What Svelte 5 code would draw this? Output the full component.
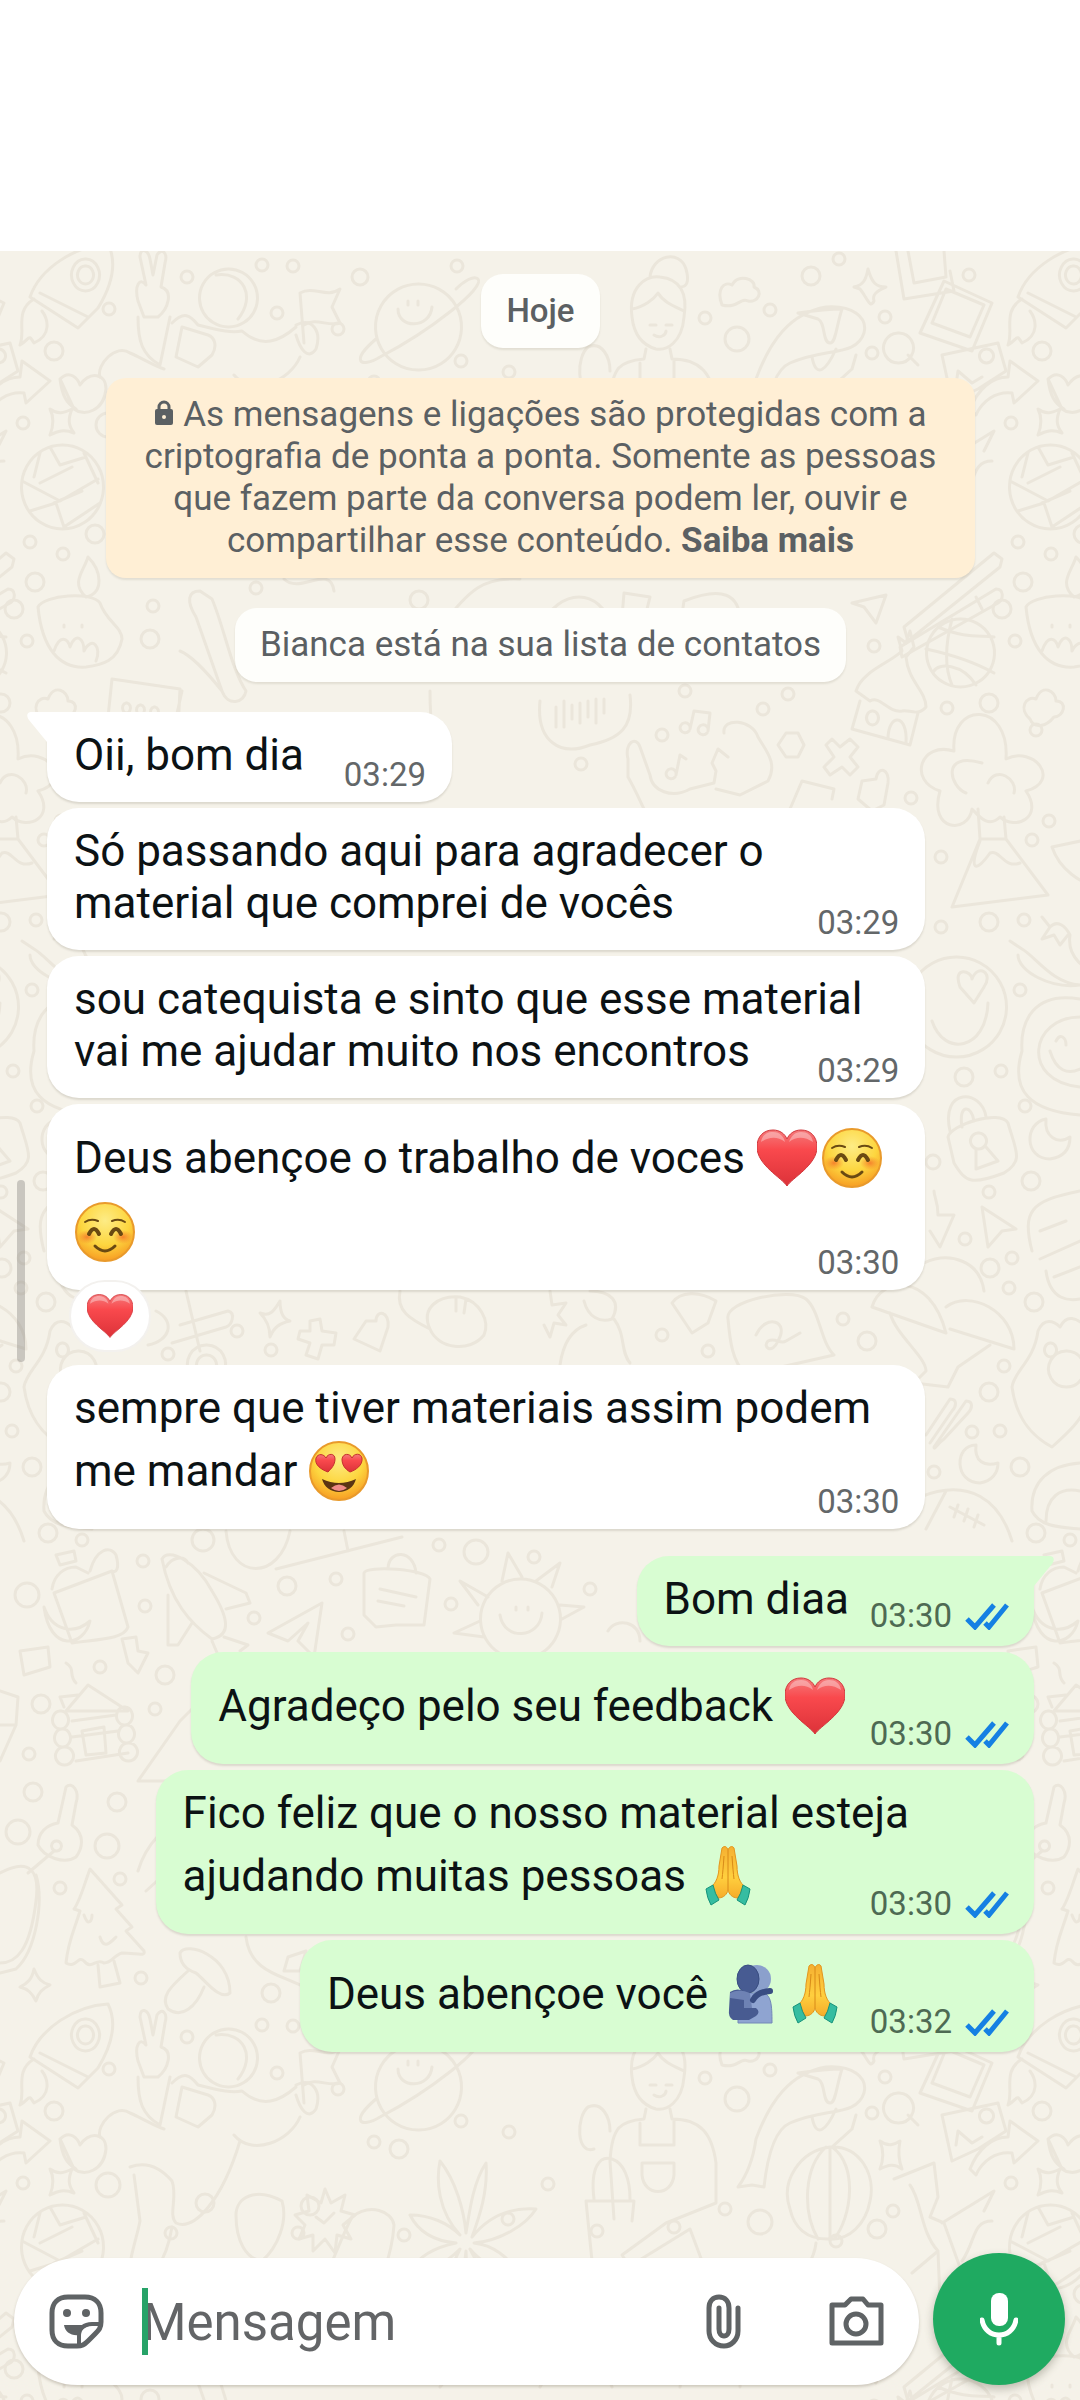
<script lang="ts">
	type Emoji = 'heart' | 'blush' | 'heartEyes' | 'pray' | 'hug';

	interface Message {
		text: string;
		emojis?: Emoji[];
		time: string;
		sent?: boolean;
		tail?: boolean;
		reaction?: Emoji;
	}

	const messages: Message[] = [
		{ text: 'Oii, bom dia', time: '03:29', tail: true },
		{ text: 'Só passando aqui para agradecer o material que comprei de vocês', time: '03:29' },
		{ text: 'sou catequista e sinto que esse material vai me ajudar muito nos encontros', time: '03:29' },
		{ text: 'Deus abençoe o trabalho de voces', emojis: ['heart', 'blush', 'blush'], time: '03:30', reaction: 'heart' },
		{ text: 'sempre que tiver materiais assim podem me mandar', emojis: ['heartEyes'], time: '03:30' },
		{ text: 'Bom diaa', time: '03:30', sent: true, tail: true },
		{ text: 'Agradeço pelo seu feedback', emojis: ['heart'], time: '03:30', sent: true },
		{ text: 'Fico feliz que o nosso material esteja ajudando muitas pessoas', emojis: ['pray'], time: '03:30', sent: true },
		{ text: 'Deus abençoe você', emojis: ['hug', 'pray'], time: '03:32', sent: true }
	];

	const emojiLabels: Record<Emoji, string> = {
		heart: 'coração vermelho',
		blush: 'rosto sorridente',
		heartEyes: 'rosto com olhos de coração',
		pray: 'mãos juntas',
		hug: 'pessoas se abraçando'
	};

	let draft = $state('');

	// wallpaper tile, repeated every TILE_W x TILE_H
	const TILE_W = 988;
	const TILE_H = 1760;
	const tiles = [[-TILE_W, 0], [0, 0], [TILE_W, 0], [-TILE_W, TILE_H], [0, TILE_H], [TILE_W, TILE_H]];

	const dots = [
		[262, 14, 6], [293, 15, 6], [187, 26, 6], [360, 26, 8], [457, 15, 6], [109, 58, 6], [277, 62, 6], [338, 78, 6],
		[54, 100, 9], [461, 110, 6], [509, 121, 6], [811, 25, 9], [839, 8, 6], [969, 24, 6], [705, 67, 6], [770, 59, 6],
		[885, 66, 6], [737, 88, 12], [872, 102, 6], [108, 174, 12], [23, 172, 6], [205, 192, 9],
		[310, 195, 9], [374, 131, 6], [399, 138, 9], [548, 173, 6], [725, 198, 6], [760, 211, 12], [893, 200, 6],
		[171, 222, 6], [298, 222, 6], [404, 224, 6], [508, 208, 6], [597, 220, 6], [674, 216, 6], [836, 230, 6],
		[877, 218, 9], [95, 283, 9], [30, 291, 6], [63, 303, 6], [35, 331, 9],
		[14, 358, 9], [150, 388, 9], [256, 337, 6], [153, 355, 6], [419, 349, 9], [27, 390, 6], [874, 395, 6],
		[989, 452, 9], [947, 457, 6], [685, 440, 6],
		[788, 443, 6], [763, 458, 6], [662, 484, 6], [581, 513, 6], [911, 547, 6], [1036, 479, 6],
		[1049, 570, 6], [1032, 589, 6], [941, 606, 6], [941, 676, 6], [989, 671, 9], [1024, 669, 6],
		[1020, 739, 6], [964, 826, 9], [1001, 820, 6], [1025, 855, 6], [933, 911, 7], [1031, 930, 9], [989, 941, 6],
		[965, 988, 6], [1012, 1007, 6], [990, 1017, 9], [1009, 1037, 6], [1034, 1051, 9], [843, 1068, 6],
		[867, 1090, 9], [1004, 1115, 6], [989, 1141, 9], [972, 1181, 6], [1000, 1180, 6], [1020, 1216, 9],
		[934, 1221, 6], [1036, 1282, 9], [237, 1080, 6], [271, 1099, 6], [168, 1103, 6], [662, 1084, 6],
		[708, 1100, 6], [82, 1289, 6], [203, 1289, 11], [27, 1344, 12], [143, 1310, 6],
		[145, 1355, 6], [287, 1335, 9], [336, 1328, 6], [254, 1367, 6], [451, 1353, 6], [348, 1383, 6],
		[476, 1301, 12], [534, 1306, 6], [590, 1338, 6], [439, 1294, 6], [100, 1416, 6], [165, 1424, 9],
		[41, 1453, 9], [155, 1458, 6], [29, 1503, 6], [33, 1541, 9], [117, 1551, 9], [18, 1581, 12],
		[107, 1595, 12], [60, 1637, 6], [120, 1628, 6], [141, 1727, 6], [271, 1742, 9]
	];

	const doodles = [
		// rocket with flame
		'M30 46 C40 17 75-5 108-7 C117 11 112 34 98 57 L78 77 Z M34 48 C14 60 26 80 20 94 C30 88 28 82 34 92 C52 84 48 68 42 60 M40 42 L88 66',
		'M85 8 a14 16 0 1 0 1 0 M85 15 a8 9 0 1 0 1 0',
		// peace sign and astronaut
		'M138 50 C134 34 140 26 146 34 L140 6 C140-4 148-2 150 8 L153 24 L157 4 C162-4 168 2 165 12 L161 36 C174 40 168 58 158 66 L144 66 Z M138 66 C138 90 142 104 160 114 L170 66',
		'M228 18 a29 29 0 1 0 1 0 M216 24 C244 20 256 46 238 68 M172 72 C184 60 190 64 198 74 C222 80 232 82 242 80 C262 98 280 90 296 76 M100 126 C96 114 116 92 130 102 C140 106 152 114 164 118 M296 74 C312 66 322 80 316 98 C308 110 300 98 296 84 M300 106 C290 130 252 146 234 124 M182 76 L208 84 C214 86 218 94 212 104 L198 116 L176 106 Z',
		'M60 128 C70 118 78 128 80 134 C90 120 106 122 106 138 C104 160 84 166 74 158 Z M60 128 C62 144 66 152 76 158 M130 156 C146 150 160 156 172 170 C178 186 168 204 176 212 C194 220 222 190 240 130 M134 164 L140 210 C134 240 124 256 136 268 C150 272 166 252 172 216',
		// flag
		'M300 42 L304 92 M300 42 C314 34 326 48 340 38 L332 56 L340 72 C328 76 316 66 304 74',
		// planet
		'M418 33 a43 43 0 1 0 1 0 M398 58 C398 78 430 78 432 56 M408 50 v4 M418 50 v4 M376 88 C350 110 360 118 380 106 C430 80 486 36 478 28 C474 24 464 30 456 38',
		// gardener
		'M632 66 C628 36 646 24 660 26 C680 28 688 42 684 66 C682 92 666 100 656 98 C642 94 634 84 632 66 M632 58 C644 56 654 48 658 42 C664 52 676 56 684 60 M650 26 C652 4 680-2 686 18 C690 32 686 36 680 36 M656 74 h-6 M672 74 h-6 M654 84 C660 88 666 84 666 80',
		'M646 98 L644 108 C620 110 612 116 610 150 L614 208 M670 98 L672 108 C700 108 712 122 716 152 L716 192 L666 212 L622 244 L630 256 L638 250 L690 218 L702 250 L592 250 L586 190 L634 190 L632 210 M640 112 L640 134 L674 134 L674 110 M642 152 h32 v12 C672 186 644 186 642 164 Z M594 188 C590 156 600 144 612 148 C624 152 630 168 630 188 M594 138 C576 144 576 106 588 96 C602 90 610 106 610 120',
		// cloud
		'M722 54 C716 38 724 30 732 34 C738 22 756 28 754 36 C764 40 758 52 748 50 C740 46 738 58 722 54 Z',
		// sparkles
		'M868 18 C872 32 876 36 886 36 C876 40 872 44 874 50 C870 58 868 48 860 38 L854 36 C864 34 866 28 868 18 Z',
		'M50 158 C58 164 64 162 72 158 C68 168 68 174 74 182 C64 178 58 180 50 184 C54 174 54 166 50 158 Z',
		'M880 130 C888 136 894 134 900 130 C898 140 898 148 902 158 C894 152 888 154 880 158 C884 148 884 140 880 130 Z',
		// koi
		'M756 128 C770 90 790 62 826 56 C852 54 868 66 864 82 C856 106 826 96 790 112 C776 118 768 140 764 176 L752 174 L738 176 C750 160 754 142 756 128 Z M798 62 C812 60 832 58 842 58 C836 76 836 92 830 92 C822 92 826 72 818 68 Z M812 106 C816 128 826 120 836 98',
		// magnifier
		'M898 82 a15 15 0 1 0 1 0 M908 104 l10 10',
		// photos
		'M896 0 L904 48 L954 40 L950 20 M908 0 L914 32 L946 26 L944 0 M944 30 L992 52 L972 100 L920 82 Z M946 38 L984 54 L970 86 L932 72 Z M942 104 L998 92 L1006 120 L978 138 L952 150 Z M956 134 L958 120 L972 132 L982 126 M986 98 a7 7 0 1 0 1 0',
		// arrow
		'M970 158 C978 138 992 126 1008 126 L1010 110 L1038 130 L1014 152 L1012 142 C996 140 982 150 976 164 Z',
		// volleyball
		'M62 194 a41 42 0 1 0 1 0 M22 230 L60 250 L98 228 M30 260 L56 252 L64 276 M40 202 L34 226 M84 202 L98 232 M50 196 L60 214 L86 206 M40 232 L72 216 M54 252 L82 240 M64 276 L100 252',
		// badge
		'M325 178 l6 14 14-8 -4 16 14 4 -12 10 8 14 -14-4 -2 18 -10-14 -12 12 0-16 -14 4 6-14 -10-10 14-4 -2-16 14 8 Z M316 206 l8 6 10-10',
		// star anise
		'M460 224 C438 200 436 170 440 150 C456 170 464 200 466 222 C470 196 474 170 486 152 C488 180 480 204 472 226 C488 206 508 196 536 198 C526 214 500 230 474 232 C492 234 510 246 516 262 C496 260 480 250 470 238 C482 260 488 280 488 306 C474 288 466 266 466 240 C464 264 456 290 444 306 C442 280 450 258 460 238 C446 252 432 260 412 260 C416 246 436 236 456 232 C434 230 418 220 410 204 C430 204 448 212 460 224 Z',
		// whale
		'M352 206 C370 192 392 200 394 214 C392 246 378 280 364 300 M352 206 C334 240 330 270 304 290 C290 298 276 294 270 286 L262 268 L264 290 L256 306 M236 204 C236 186 256 176 282 190 C288 210 278 236 262 250 C246 248 236 230 236 204 Z',
		// paper lantern
		'M790 198 C780 170 800 140 830 136 C860 134 876 164 870 190 C866 212 850 230 828 228 C806 228 794 216 790 198 Z M826 136 C804 156 802 200 818 228 M832 136 C858 154 852 206 834 228 M830 136 L830 228 M832 136 L852 118 L856 104 M816 232 C814 250 800 270 776 290',
		// bamboo
		'M894 168 L934 152 L938 186 L930 206 L944 212 L962 262 L952 300 M910 174 C922 190 920 220 938 240 L940 290 M938 240 L912 262 M962 250 C976 230 972 210 992 210 M942 212 L994 180 L984 200',
		// small cloud, cross, radio
		'M196 284 C186 276 188 262 198 264 C202 252 218 252 222 262 C232 262 234 278 224 282 Z',
		'M520 262 l12 14 18-22 10 8 -14 22 18 4 -4 10 -20-2 -6 24 -10-4 4-24 -16-20 Z',
		'M636 320 L642 298 C660 290 700 294 716 304 L712 318 M650 306 l10 6 M670 304 l10 8 M690 306 l8 8 M644 284 l-8-14 M624 296 l-12-4',
		// candle bowl
		'M38 356 C44 344 92 340 100 352 C106 370 122 376 122 388 C118 410 102 414 86 416 C60 418 42 398 38 356 Z M86 346 C70 332 84 320 88 306 C102 320 104 342 86 346 M64 374 v2 M82 374 v2 M54 400 C60 382 68 388 70 396 C76 380 84 388 84 400 C92 384 102 396 96 410',
		// speech box
		'M112 428 L180 438 L178 480 L108 466 Z M182 440 L174 476 M126 452 a4 5 0 1 0 1 0 M140 454 a4 5 0 1 0 1 0 M154 456 a4 5 0 1 0 1 0',
		'M42 468 C30 458 38 444 48 448 C54 432 68 440 68 450 C80 450 76 466 66 466 C58 476 46 478 42 468 Z',
		// cactus
		'M196 366 C186 350 188 340 200 340 L212 348 C224 376 232 420 246 440 C244 452 228 456 222 440 Z M180 400 C190 404 206 420 222 440',
		// chopsticks, basketball, hut
		'M904 376 L994 302 L1002 308 L1000 316 L908 390 Z M900 396 L996 338 C1004 338 1004 348 998 352 L902 406 Z M976 346 l6 12',
		'M960 368 a34 34 0 1 0 1 0 M938 376 C966 388 980 384 994 386 M926 398 C954 404 976 412 994 422 M952 368 C944 398 946 420 952 434 M976 434 C962 412 938 412 934 420',
		'M856 440 C862 420 890 412 902 400 L898 386 L906 392 L910 380 L914 396 L906 406 C908 430 926 440 926 456 C918 466 908 458 902 460 C888 462 880 444 870 450 Z M860 450 L852 478 L910 494 L918 462 M872 460 a6 7 0 1 0 1 0 M888 488 C888 462 908 462 906 492',
		// shapes around the notices
		'M284 328 C300 344 330 312 334 340 M440 376 C470 340 480 326 520 328 M540 376 C560 336 600 336 612 376 M624 342 L650 346 L644 370 L622 366 Z M680 376 L684 350 C720 336 742 340 740 376 M852 352 L886 344 L876 372 L864 356 Z',
		'M430 440 C430 500 440 490 446 520 M540 450 C536 490 560 506 590 494 C620 488 634 476 630 444 M556 456 v20 M564 450 v26 M572 454 v14 M580 452 v20 M588 450 v16 M596 448 v24 M604 448 v14',
		// music notes
		'M690 478 l4-18 16 2 -2 18 M690 478 a5 5 0 1 0-1 2 M708 480 a5 5 0 1 0-1 2 M676 524 l4-20 6 4 M676 524 a5 5 0 1 0-1 2',
		// dancer
		'M628 526 L628 508 C624 492 636 484 640 496 L650 524 C652 540 672 548 690 538 L714 532 L716 520 L712 512 L718 498 L728 506 M628 526 C636 540 640 550 644 558 M724 482 C722 466 752 468 758 486 C766 500 778 512 768 530 L740 544 L716 538',
		'M786 482 l12 0 6 12 -6 12 -12 0 -8-12 Z M832 488 l8 8 10-8 8 8 -8 10 8 10 -8 8 -8-8 -12 8 -6-8 10-10 -8-12 Z',
		'M858 548 L862 530 L876 528 C878 514 890 518 888 532 L884 554 L872 560 Z M790 558 L802 530 L834 538 L832 548',
		// tree over volcano
		'M954 500 C950 450 1010 450 1006 508 C1034 494 1062 530 1026 540 C1044 566 1016 580 1000 566 C988 578 978 564 972 558 C968 584 928 580 940 540 C908 530 920 490 954 500 Z M982 512 C940 500 950 536 966 542 M988 532 C996 514 1018 528 1014 542',
		'M978 558 L980 588 L952 656 L1048 644 L1006 588 L1004 566 M980 588 L1006 588 M980 590 C968 620 976 622 990 602 C1000 598 1004 618 1020 612',
		'M1052 596 C1060 620 1080 630 1100 640 M1052 596 L1090 588',
		// chillies
		'M1042 666 L1050 676 C1058 668 1066 676 1070 684 C1066 710 1090 720 1110 732 M1050 676 L1042 688 L1054 684 L1060 694 L1068 684 M1010 690 L1022 698 C1036 706 1052 732 1080 734 C1050 738 1018 720 1018 704',
		// faces
		'M956 706 a50 50 0 1 0 1 0 M932 770 C944 806 986 800 988 752 M960 736 C952 714 972 720 972 728 C978 712 994 722 984 736 L974 752 Z',
		'M1080 748 C1034 740 1020 770 1022 800 C1010 840 1030 860 1080 864 M1080 766 C1030 766 1020 830 1080 836 M1056 790 C1060 782 1066 786 1066 794 M1050 800 C1056 820 1068 824 1080 818',
		// padlock and moon
		'M950 880 C940 836 982 838 986 866 M962 876 C958 852 972 854 974 870 M948 886 C950 874 1000 858 1008 872 C1016 900 1024 910 1004 922 C972 934 966 932 954 912 Z M978 882 a8 8 0 1 0 1 0 M976 898 L976 918 L998 910 L986 896',
		'M1046 868 C1024 872 1024 908 1050 908 C1064 906 1070 898 1070 886 C1058 894 1044 886 1046 868 Z',
		'M934 940 C934 946 938 950 938 964 L954 964 L940 996 L930 980 M982 956 L1016 978 L1002 980 L988 996 Z',
		'M1032 1000 C1022 960 1030 950 1080 940 M1040 1008 L1080 990 M1040 980 l26-10 M1046 1020 C1050 1050 1070 1050 1080 1048 M1054 1026 l26-10',
		// mushrooms
		'M924 1012 C950 1000 980 1010 984 1040 M872 1056 C880 1026 930 1020 946 1082 Z M946 1056 C970 1038 1014 1060 1014 1098 L950 1078 M890 1062 C896 1084 926 1106 926 1120 L914 1132 L948 1136 L958 1116 L990 1094',
		// note
		'M728 1068 C724 1050 790 1036 806 1048 C820 1060 820 1090 834 1104 L746 1124 C732 1110 730 1090 728 1068 Z M756 1084 C766 1062 790 1070 778 1090 C772 1104 762 1096 768 1090 C776 1086 780 1094 786 1090 L800 1082',
		'M1038 1080 C1044 1066 1054 1070 1060 1076 C1066 1064 1076 1064 1090 1080 M1038 1080 C1034 1110 1014 1120 1012 1136 C1016 1166 1030 1184 1052 1196 C1070 1180 1080 1170 1086 1156 M1066 1100 a18 18 0 1 0 1 0 M1050 1092 a6 7 0 1 0 1 0',
		'M926 1184 L950 1148 C958 1148 956 1156 952 1160 L930 1192 M934 1196 L966 1150 C974 1150 972 1158 968 1162 L944 1188 C938 1192 934 1200 934 1196 Z',
		'M976 1194 C954 1194 954 1232 980 1232 C992 1230 998 1222 998 1212 C984 1216 974 1210 976 1194 Z',
		'M920 1246 C970 1226 1000 1250 1012 1290 M926 1278 L946 1240 M950 1256 l34 18 M958 1254 l-4 12 M968 1258 l-4 12 M978 1264 l-4 12',
		'M1032 1260 C1030 1230 1050 1214 1080 1212 M1032 1260 C1040 1276 1060 1276 1080 1278 M1046 1270 C1046 1246 1060 1236 1080 1240',
		// row behind the reaction
		'M260 1062 C270 1066 274 1060 280 1050 C280 1060 282 1068 290 1070 C280 1072 274 1076 270 1086 C270 1078 268 1070 260 1062 Z',
		'M310 1070 l10-2 2 12 14 2 -2 12 -12 0 -4 14 -12-4 4-12 -12-4 2-8 10 0 Z',
		'M366 1070 L376 1070 C376 1058 390 1060 388 1076 L380 1100 L354 1088 Z M400 1040 C396 1060 410 1068 430 1078 C420 1056 440 1044 460 1046 C480 1050 490 1070 484 1084 C470 1102 438 1098 430 1078 M456 1048 v12 M466 1048 l-2 14',
		'M180 1074 L228 1060 C236 1062 232 1074 226 1076 L172 1092 M186 1040 l14 60 M206 1094 a19 19 0 1 0 1 0 M206 1104 a10 10 0 1 0 1 0 M156 1060 C176 1070 170 1090 148 1094',
		'M550 1040 l2 14 14-2 -8 12 8 10 -12-2 -4 14 -6-12 M584 1050 C588 1066 600 1072 612 1068 C622 1050 610 1040 590 1040 M586 1074 C568 1080 562 1100 560 1114 M614 1068 C626 1084 620 1100 630 1112 M672 1052 C680 1040 700 1040 716 1050 L708 1072 L692 1082 Z',
		// jar and banana
		'M54 1342 L112 1320 L128 1376 C124 1388 100 1388 72 1392 Z M52 1338 C54 1324 64 1316 76 1316 L88 1322 M56 1304 l18-4 2 10 -16 4 Z M90 1320 C96 1298 110 1294 116 1304 C120 1318 116 1322 112 1320 M44 1356 C52 1380 74 1384 90 1370 C84 1396 50 1402 44 1356 Z',
		// shuttle
		'M162 1308 C168 1296 196 1310 212 1340 C228 1366 232 1384 212 1388 C190 1372 170 1350 162 1308 Z M204 1322 L246 1342 L250 1352 L226 1358 M168 1344 L168 1394 L178 1394 L192 1372 M212 1390 L218 1404 M224 1386 L248 1394 L240 1400 M166 1316 C172 1306 184 1304 188 1312',
		'M122 1388 L136 1386 L138 1400 L148 1402 L138 1422 L128 1412 Z M20 1400 L48 1396 L50 1416 L24 1424 Z',
		// paper plane, speech bag, sun
		'M268 1382 L322 1352 L314 1406 L298 1390 L308 1372 L288 1390 Z M364 1322 C366 1314 426 1318 430 1328 L424 1374 L396 1374 L376 1376 L364 1364 Z M388 1318 C388 1298 414 1298 416 1322 M380 1338 l36 8 M378 1350 l26 5',
		'M520 1328 a40 40 0 1 0 1 0 M500 1364 C504 1390 540 1388 542 1362 M516 1356 v3 M528 1356 v3 M502 1330 L508 1302 L522 1326 M536 1330 L560 1312 L552 1336 M488 1346 L460 1330 L478 1354 M560 1354 L584 1356 L562 1368 M480 1370 L454 1382 L484 1386 M608 1380 C616 1366 640 1370 640 1390',
		'M226 1280 C230 1330 280 1330 290 1280 M276 1318 L402 1286 M344 1280 L348 1300',
		// cabin
		'M64 1456 L60 1446 L78 1444 M66 1460 L88 1434 L128 1460 Z M60 1460 a8 9 0 1 0 1 0 M62 1478 a8 9 0 1 0 1 0 M64 1496 a9 9 0 1 0 1 0 M124 1456 a8 9 0 1 0 1 0 M126 1474 a8 9 0 1 0 1 0 M128 1492 a9 9 0 1 0 1 0 M72 1470 L116 1464 M72 1486 L118 1480 M76 1510 L128 1502 M82 1480 L104 1476 L106 1502 L86 1504 Z M66 1412 C76 1418 68 1424 76 1432',
		'M0 1440 L18 1446 L16 1474 L0 1474 M16 1474 L0 1510 M138 1530 L180 1470 L200 1450 M138 1530 L200 1530',
		// key
		'M58 1572 L66 1536 C72 1530 80 1540 76 1552 L72 1574 C86 1584 82 1598 76 1606 C64 1614 44 1606 38 1594 C38 1582 46 1574 58 1572 M56 1590 a5 5 0 1 0 1 0 M54 1600 L28 1622',
		// avocado, tree, mushroom
		'M0 1622 C30 1606 40 1620 36 1650 C30 1700 16 1712 0 1712 M36 1624 C44 1650 36 1700 16 1718 L0 1722',
		'M90 1618 C84 1634 80 1650 74 1658 L80 1660 C74 1680 68 1690 66 1712 C76 1718 78 1704 84 1710 C92 1720 96 1706 104 1712 C112 1712 114 1704 122 1702 C136 1702 146 1706 144 1700 L126 1680 L132 1676 L116 1658 L122 1654 Z M98 1714 L100 1736 L120 1732 L114 1710 M84 1664 C88 1676 92 1670 92 1664 M100 1686 C104 1700 112 1690 116 1686',
		'M180 1702 C186 1690 230 1704 230 1742 C220 1750 206 1730 196 1722 C184 1718 180 1710 180 1702 Z M188 1720 C170 1736 160 1746 168 1758 C182 1768 196 1756 204 1736',
		'M34 1718 C38 1728 42 1732 50 1734 C42 1738 38 1742 36 1750 C32 1742 28 1738 20 1736 C28 1732 32 1728 34 1718 Z M138 1620 C150 1580 180 1570 190 1560 M146 1640 L190 1600 M246 1686 C250 1720 280 1724 300 1734 M288 1706 l18-6 -6 20 -16 0 Z'
	];
</script>

{#snippet emoji(name: Emoji)}
	<svg class="emoji" viewBox="0 0 60 60" role="img" aria-label={emojiLabels[name]}>
		{#if name === 'heart'}
			<path d="M30 58 C25 50 0 37 0 19 C0 8 7 2 16 2 C23 2 28 6 30 11 C32 6 37 2 44 2 C53 2 60 8 60 19 C60 37 35 50 30 58 Z" fill="url(#heart-fill)" stroke="#d1363b" />
			<path d="M4 14 C5 7 10 4 16 4 C23 4 27 9 28 14 C20 8 12 9 4 14 Z M32 14 C34 8 38 4 44 4 C50 4 55 7 56 14 C48 9 40 8 32 14 Z" fill="#fff" opacity="0.35" />
		{:else if name === 'blush'}
			<circle cx="30" cy="30" r="29" fill="url(#face-fill)" stroke="#e99a2b" stroke-width="2" />
			<ellipse cx="12" cy="35" rx="10" ry="7" fill="url(#cheek-fill)" />
			<ellipse cx="48" cy="35" rx="10" ry="7" fill="url(#cheek-fill)" />
			<g fill="none" stroke="#6a4a12" stroke-linecap="round">
				<path d="M10 20 Q16 16 23 19 M37 19 Q44 16 50 20" stroke-width="2" />
				<path d="M14 32 Q19 22 24 32 M36 32 Q41 22 46 32" stroke-width="4" />
				<path d="M20 44 Q30 54 40 44" stroke-width="3" />
			</g>
		{:else if name === 'heartEyes'}
			<circle cx="30" cy="30" r="29" fill="url(#face-fill)" stroke="#e99a2b" stroke-width="2" />
			<path d="M19 31 C13 29 5 24 7 17 C9 12 15 13 17 17 C19 12 26 12 26 18 C26 24 22 28 19 31 Z M41 31 C36 28 33 24 33 18 C34 12 41 12 43 17 C45 12 52 12 53 17 C54 24 47 29 41 31 Z" fill="url(#heart-fill)" stroke="#c5302d" />
			<path d="M13 38 Q30 46 47 38 C45 46 38 51 30 51 C22 51 15 46 13 38 Z" fill="#5b3413" />
			<path d="M22 47 Q30 40 38 47 Q30 53 22 47 Z" fill="#ef8b87" />
		{:else if name === 'pray'}
			<path d="M24 2 C27-1 29 1 30 4 C31 1 34-1 36 2 L39 20 C39 30 42 37 47 41 L40 52 C34 52 31 48 30 44 C29 48 26 52 20 52 L13 41 C18 37 21 30 21 20 Z" fill="url(#hand-fill)" stroke="#e3951d" />
			<path d="M30 4 V44 M26 10 Q25 25 24 33 M34 10 Q35 25 36 33" fill="none" stroke="#d88a18" />
			<path d="M8 43 L15 39 Q17 48 21 54 L13 59 Q9 52 8 43 Z M52 43 L45 39 Q43 48 39 54 L47 59 Q51 52 52 43 Z" fill="#36bda1" stroke="#16937b" />
		{:else}
			<ellipse cx="37" cy="15" rx="14" ry="14" fill="#8ba0cc" />
			<path d="M26 29 H44 C51 32 52 40 52 59 H18 V29 Z" fill="#8fa4d1" stroke="#7388b7" />
			<ellipse cx="28" cy="15" rx="11" ry="14" fill="#475b92" stroke="#394d81" />
			<path d="M10 28 Q17 23 27 28 L25 44 H36 Q41 48 36 52 L29 56 H13 Q8 53 9 46 Z" fill="#485b91" />
			<path d="M10 29 Q19 24 30 29 L32 44 L24 44 L24 36 L10 34 Z" fill="#6e82b4" />
			<path d="M33 36 Q37 28 50 27" fill="none" stroke="#394d82" stroke-width="6" stroke-linecap="round" />
		{/if}
	</svg>
{/snippet}

<svg class="shared-defs" aria-hidden="true">
	<defs>
		<linearGradient id="heart-fill" x1="0" y1="0" x2="0" y2="1">
			<stop offset="0" stop-color="#f47b7c" />
			<stop offset="0.35" stop-color="#f9494d" />
			<stop offset="1" stop-color="#dc3239" />
		</linearGradient>
		<radialGradient id="face-fill" cx="0.5" cy="0.3" r="0.7">
			<stop offset="0" stop-color="#fdec86" />
			<stop offset="0.6" stop-color="#fdd63f" />
			<stop offset="1" stop-color="#f79d23" />
		</radialGradient>
		<radialGradient id="cheek-fill">
			<stop offset="0" stop-color="#f4742a" stop-opacity="0.85" />
			<stop offset="1" stop-color="#f4842a" stop-opacity="0" />
		</radialGradient>
		<linearGradient id="hand-fill" x1="0" y1="0" x2="0" y2="1">
			<stop offset="0" stop-color="#f5b032" />
			<stop offset="0.6" stop-color="#ffcf3e" />
			<stop offset="1" stop-color="#f6ac2a" />
		</linearGradient>
	</defs>
</svg>

<div class="screen">
	<header class="top-space"></header>

	<div class="chat">
		<svg class="wallpaper" aria-hidden="true">
			<defs>
				<g id="doodle-tile">
					{#each doodles as d}
						<path {d} />
					{/each}
					{#each dots as [x, y, r]}
						<circle cx={x} cy={y} {r} />
					{/each}
				</g>
			</defs>
			{#each tiles as [x, y]}
				<use href="#doodle-tile" {x} {y} />
			{/each}
		</svg>

		<main class="conversation">
			<div class="chip day">Hoje</div>

			<p class="notice">
				<svg class="lock" viewBox="0 0 20 26" aria-hidden="true">
					<path d="M5 11 V7 a5 5 0 0 1 10 0 V11" fill="none" stroke="currentColor" stroke-width="3" />
					<rect x="1" y="9" width="18" height="16" rx="2" fill="currentColor" />
					<circle cx="10" cy="17" r="2" fill="#ffefd5" />
				</svg>
				As mensagens e ligações são protegidas com a criptografia de ponta a ponta. Somente as pessoas que fazem parte da conversa podem ler, ouvir e compartilhar esse conteúdo. <a href="#saiba-mais">Saiba mais</a>
			</p>

			<div class="chip contact">Bianca está na sua lista de contatos</div>

			<div class="messages">
				{#each messages as msg}
					<article class="bubble" class:sent={msg.sent} class:tail={msg.tail} class:reacted={msg.reaction}>
						<p class="text">
							{msg.text}{#each msg.emojis ?? [] as name, i}{i === 0 ? ' ' : ''}{@render emoji(name)}<wbr />{/each}<span class="spacer"></span>
						</p>
						<div class="meta">
							<time>{msg.time}</time>
							{#if msg.sent}
								<svg class="checks" viewBox="0 0 44 27" role="img" aria-label="Lida">
									<path d="M2 16 L10 24 L29 2 M20 20 L24 24 L42 2" />
								</svg>
							{/if}
						</div>
						{#if msg.reaction}
							<button class="reaction" aria-label="Reação">{@render emoji(msg.reaction)}</button>
						{/if}
					</article>
				{/each}
			</div>
		</main>

		<div class="scroll-thumb"></div>

		<footer class="composer">
			<div class="field">
				<button class="icon" aria-label="Figurinhas">
					<svg viewBox="0 0 55 55" fill="none" stroke="currentColor" stroke-width="5">
						<path d="M19 3 H36 C46 3 52 9 52 19 V28 C52 34 50 36 46 40 L39 47 C35 51 33 52 28 52 H19 C9 52 3 46 3 36 V19 C3 9 9 3 19 3 Z" />
						<path d="M51 30 H43 C35 30 30 34 30 42 V51" stroke-width="4" />
						<path d="M15 31 H43 C36 33 32 36 30 41 C22 42 16 38 15 31 Z" fill="currentColor" stroke="none" />
						<circle cx="18" cy="19" r="4" fill="currentColor" stroke="none" />
						<circle cx="37" cy="19" r="4" fill="currentColor" stroke="none" />
					</svg>
				</button>
				<label class="entry">
					<input type="text" placeholder="Mensagem" aria-label="Mensagem" bind:value={draft} />
				</label>
				<button class="icon attach" aria-label="Anexar">
					<svg viewBox="0 0 55 55" fill="none" stroke="currentColor" stroke-width="5" stroke-linecap="round">
						<path d="M42 14 V37 C42 46 35 52 28 52 C19 52 13 45 13 37 V14 C13 7 17 3 23 3 C29 3 33 7 33 14 V35 C33 39 31 42 28 42 C25 42 23 39 23 35 V14" />
					</svg>
				</button>
				<button class="icon" aria-label="Câmera">
					<svg viewBox="0 0 55 55" fill="none" stroke="currentColor" stroke-width="5" stroke-linejoin="round">
						<path d="M3 11 H16 L22 5 H34 L39 11 H52 V49 H3 Z" />
						<circle cx="27" cy="30" r="10" />
					</svg>
				</button>
			</div>
			<button class="mic" aria-label="Gravar áudio">
				<svg viewBox="0 0 38 54" aria-hidden="true">
					<rect x="11" y="1" width="17" height="33" rx="8" fill="#fff" />
					<path d="M2 28 C4 38 11 43 19 43 C27 43 34 38 36 28 M19 43 V51" fill="none" stroke="#fff" stroke-width="5" stroke-linecap="round" />
				</svg>
			</button>
		</footer>
	</div>
</div>

<style>
	.shared-defs {
		position: absolute;
		width: 0;
		height: 0;
	}

	.screen {
		display: flex;
		flex-direction: column;
		min-height: 100vh;
		font-family: Roboto, 'Liberation Sans', sans-serif;
		color: #0c1214;
		background: #fff;
	}

	.top-space {
		height: 251px;
	}

	.chat {
		position: relative;
		flex: 1;
		display: flex;
		flex-direction: column;
		background: #f5f2e9;
		overflow: hidden;
	}

	.wallpaper {
		position: absolute;
		inset: 0;
		width: 100%;
		height: 100%;
		fill: none;
		stroke: #ebe6db;
		stroke-width: 3;
		stroke-linejoin: round;
		stroke-linecap: round;
	}

	.conversation {
		position: relative;
		flex: 1;
		display: flex;
		flex-direction: column;
		align-items: center;
		gap: 30px;
		padding: 23px 46px 0 47px;
	}

	.chip {
		padding: 0 25px;
		line-height: 74px;
		border-radius: 22px;
		background: #fefefb;
		color: #5b6063;
		box-shadow: 0 2px 2px rgba(90, 80, 60, 0.12);
	}

	.day {
		font-size: 33px;
		font-weight: 500;
	}

	.contact {
		font-size: 35px;
	}

	.notice {
		box-sizing: border-box;
		width: 88%;
		margin: 0;
		padding: 16px 30px;
		border-radius: 20px;
		background: #ffefd5;
		color: #5b6063;
		font-size: 35px;
		line-height: 42px;
		text-align: center;
		box-shadow: 0 2px 2px rgba(90, 80, 60, 0.12);
	}

	.notice a {
		color: inherit;
		font-weight: 700;
		text-decoration: none;
	}

	.lock {
		width: 20px;
		height: 26px;
	}

	.messages {
		align-self: stretch;
		display: flex;
		flex-direction: column;
		align-items: flex-start;
		gap: 6px;
	}

	.bubble {
		position: relative;
		display: grid;
		max-width: 89%;
		box-sizing: border-box;
		padding: 17px 26px 8px 27px;
		border-radius: 32px;
		background: #fff;
		box-shadow: 0 2px 2px rgba(90, 80, 60, 0.16);
	}

	.bubble.sent {
		align-self: flex-end;
		padding-right: 25px;
		padding-bottom: 11px;
		background: #d8fdd2;
	}

	.bubble.tail {
		border-top-left-radius: 0;
	}

	.bubble.sent.tail {
		margin-top: 21px;
		border-top-left-radius: 32px;
		border-top-right-radius: 0;
	}

	.bubble.tail::before {
		content: '';
		position: absolute;
		top: 0;
		right: 100%;
		width: 20px;
		height: 30px;
		background: inherit;
		clip-path: path('M20 0 H4 C0 0 -1 4 2 8 L20 30 Z');
	}

	.bubble.sent.tail::before {
		right: auto;
		left: 100%;
		clip-path: path('M0 0 H16 C20 0 21 4 18 8 L0 30 Z');
	}

	.bubble.reacted {
		margin-bottom: 69px;
	}

	/* text and time share one grid cell, the spacer keeps the last line clear of the time */
	.text,
	.meta {
		grid-area: 1 / 1;
	}

	.text {
		margin: 0;
		padding-bottom: 13px;
		font-size: 44px;
		line-height: 52px;
	}

	.sent .text {
		padding-bottom: 10px;
	}

	.spacer {
		display: inline-block;
		width: 122px;
	}

	.sent .spacer {
		width: 160px;
	}

	.emoji {
		width: 60px;
		height: 60px;
		margin: 7px 4px 7px 1px;
		vertical-align: -22px;
	}

	.meta {
		place-self: end;
		display: flex;
		align-items: center;
		gap: 13px;
		font-size: 33px;
		line-height: 38px;
		color: #636769;
	}

	.sent .meta {
		color: #4e6a53;
	}

	.checks {
		width: 44px;
		height: 27px;
		fill: none;
		stroke: #1580e3;
		stroke-width: 5;
	}

	.reaction {
		position: absolute;
		left: 22px;
		top: calc(100% - 10px);
		display: flex;
		align-items: center;
		justify-content: center;
		width: 82px;
		height: 72px;
		padding: 0;
		border: 2px solid #f3f1ee;
		border-radius: 36px;
		background: #fff;
	}

	.reaction .emoji {
		width: 46px;
		height: 46px;
		margin: 0;
	}

	.scroll-thumb {
		position: absolute;
		left: 17px;
		top: 929px;
		width: 8px;
		height: 182px;
		border-radius: 4px;
		background: rgba(120, 118, 115, 0.35);
	}

	.composer {
		position: relative;
		display: flex;
		align-items: flex-end;
		gap: 14px;
		padding: 0 15px 15px 14px;
	}

	.field {
		flex: 1;
		min-width: 0;
		display: flex;
		align-items: center;
		box-sizing: border-box;
		height: 127px;
		padding: 0 35px;
		border-radius: 64px;
		background: #fff;
		box-shadow: 0 2px 3px rgba(90, 80, 60, 0.25);
	}

	.icon {
		flex: none;
		display: flex;
		width: 55px;
		height: 55px;
		padding: 0;
		border: 0;
		background: none;
		color: #5f6365;
	}

	.attach {
		margin-right: 78px;
	}

	.entry {
		position: relative;
		flex: 1;
		min-width: 0;
		margin-left: 38px;
	}

	/* text cursor */
	.entry::before {
		content: '';
		position: absolute;
		left: 0;
		top: 0;
		width: 6px;
		height: 67px;
		background: #27a368;
	}

	input {
		display: block;
		box-sizing: border-box;
		width: 100%;
		height: 67px;
		padding: 2px 0 0;
		border: 0;
		outline: 0;
		background: none;
		font-family: inherit;
		font-size: 51px;
		color: #0c1214;
	}

	input::placeholder {
		color: #636567;
		opacity: 1;
	}

	.mic {
		flex: none;
		display: flex;
		align-items: center;
		justify-content: center;
		width: 132px;
		height: 132px;
		padding: 0;
		border: 0;
		border-radius: 50%;
		background: #1faa61;
		box-shadow: 0 4px 8px rgba(60, 60, 40, 0.3);
	}

	.mic svg {
		width: 38px;
		height: 54px;
	}
</style>
